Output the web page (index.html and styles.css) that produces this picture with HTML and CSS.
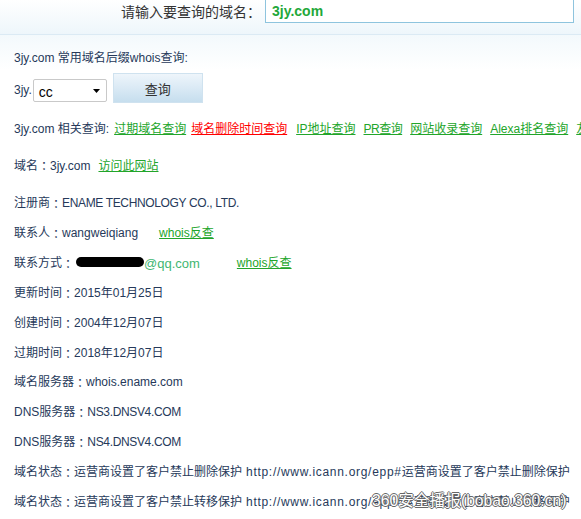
FILE: index.html
```html
<!DOCTYPE html>
<html lang="zh-CN">
<head>
<meta charset="utf-8">
<title>3jy.com whois查询</title>
<link rel="stylesheet" href="styles.css">
</head>
<body>
<div class="page">
  <header class="search-bar">
    <label class="search-label" for="domain">请输入要查询的域名<span class="colon">：</span></label>
    <input id="domain" class="search-input" type="text" value="3jy.com">
  </header>
  <main class="content">
    <p class="suffix-title">3jy.com 常用域名后缀whois查询:</p>
    <div class="suffix-form">
      <span class="suffix-prefix">3jy.</span>
      <div class="select">
        <span class="select-value">cc</span>
        <svg class="select-arrow" width="7" height="4" viewBox="0 0 7 4"><path d="M0 0H7L3.5 4Z" fill="#000"/></svg>
      </div>
      <button class="query-btn" type="button">查询</button>
    </div>
    <div class="row related">
      <span class="related-label">3jy.com 相关查询:</span>
      <a class="link first" href="#">过期域名查询</a>
      <a class="link red first" href="#">域名删除时间查询</a>
      <a class="link" href="#">IP地址查询</a>
      <a class="link narrow" href="#">PR查询</a>
      <a class="link" href="#">网站收录查询</a>
      <a class="link" href="#">Alexa排名查询</a>
      <a class="link" href="#">友情链接查询</a>
    </div>
    <div class="row domain-row">域名<span class="colon">：</span>3jy.com<a class="link visit" href="#">访问此网站</a></div>
    <div class="row registrar-row">注册商<span class="colon">：</span><span class="caps">ENAME TECHNOLOGY CO., LTD.</span></div>
    <div class="row info">联系人<span class="colon">：</span>wangweiqiang<a class="link reverse-1" href="#">whois反查</a></div>
    <div class="row info">联系方式<span class="colon">：</span><span class="redact"></span><span class="email">@qq.com</span><a class="link reverse-2" href="#">whois反查</a></div>
    <div class="row info">更新时间<span class="colon">：</span>2015年01月25日</div>
    <div class="row info">创建时间<span class="colon">：</span>2004年12月07日</div>
    <div class="row info">过期时间<span class="colon">：</span>2018年12月07日</div>
    <div class="row info">域名服务器<span class="colon">：</span>whois.ename.com</div>
    <div class="row info">DNS服务器<span class="colon">：</span><span class="caps">NS3.DNSV4.COM</span></div>
    <div class="row info">DNS服务器<span class="colon">：</span><span class="caps">NS4.DNSV4.COM</span></div>
    <div class="row info">域名状态<span class="colon">：</span>运营商设置了客户禁止删除保护<span class="url">http://www.icann.org/epp#</span>运营商设置了客户禁止删除保护</div>
    <div class="row info">域名状态<span class="colon">：</span>运营商设置了客户禁止转移保护<span class="url">http://www.icann.org/epp#</span>运营商设置了客户禁止转移保护</div>
  </main>
  <div class="watermark">360安全播报(bobao.360.cn)</div>
</div>
</body>
</html>
```
FILE: styles.css
```css
html, body {
  margin: 0;
  padding: 0;
  width: 581px;
  height: 519px;
  overflow: hidden;
  background: #fff;
}

.page {
  position: relative;
  width: 581px;
  height: 519px;
  overflow: hidden;
  font-family: "Liberation Sans", "Noto Sans CJK SC", sans-serif;
  font-size: 12px;
  color: #26395a;
  background: linear-gradient(to bottom, #f3f9fc 35px, #fff 70px);
}

.colon {
  font-family: "Noto Sans CJK TC", "Noto Sans CJK SC", sans-serif;
}

.caps {
  letter-spacing: -0.35px;
}

.url {
  margin-left: 4px;
  letter-spacing: 0.7px;
}

.search-bar {
  display: flex;
  align-items: flex-start;
  height: 34px;
  padding-left: 121px;
  border-bottom: 1px solid #dbeaf4;
  background: linear-gradient(to bottom, #fff 0, #eef6fb 34px);
  box-sizing: content-box;
}

.search-label {
  font-size: 14px;
  line-height: 22px;
  color: #333;
  width: 140px;
  white-space: nowrap;
}

.search-input {
  box-sizing: border-box;
  margin: -8px 0 0 4px;
  width: 309px;
  height: 31px;
  padding: 6px 6px 0;
  border: 1px solid #8ec4de;
  background: #fff;
  font-family: "Liberation Sans", sans-serif;
  font-size: 14px;
  font-weight: bold;
  color: #1fa83a;
  outline: none;
}

.content {
  display: block;
  padding-left: 14px;
}

.suffix-title {
  margin: 13px 0 0;
  line-height: 20px;
  white-space: nowrap;
}

.suffix-form {
  display: flex;
  align-items: flex-start;
  margin-top: 5px;
  height: 30px;
}

.suffix-prefix {
  margin-top: 6px;
  line-height: 23px;
}

.select {
  box-sizing: border-box;
  display: flex;
  align-items: center;
  justify-content: space-between;
  margin: 6px 0 0 1px;
  width: 74px;
  height: 23px;
  padding: 2px 6px 0 5px;
  border: 1px solid #c9c9c9;
  border-radius: 2px;
  background: #fff;
}

.select-value {
  font-size: 14px;
  color: #000;
}

.select-arrow {
  display: block;
  margin-top: -1px;
}

.query-btn {
  box-sizing: border-box;
  margin-left: 6px;
  width: 90px;
  height: 30px;
  padding: 0;
  border: 1px solid #cfe2ef;
  background: linear-gradient(to bottom, #eef5fb 0, #c6deee 100%);
  font-family: "Liberation Sans", "Noto Sans CJK SC", sans-serif;
  font-size: 13px;
  color: #333;
}

.row {
  display: flex;
  white-space: nowrap;
  line-height: 29.9px;
}

.related {
  margin-top: 11px;
  line-height: 30px;
}

.related > * {
  flex-shrink: 0;
}

.link {
  color: #22a52a;
  text-decoration: underline;
  margin-left: 8px;
}

.link.first {
  margin-left: 5px;
}

.link.red {
  color: #ff0000;
  margin-right: 1px;
}

.link.narrow {
  letter-spacing: -0.5px;
}

.domain-row {
  margin-top: 6.5px;
  line-height: 30px;
}

.link.visit {
  margin-left: 8px;
}

.registrar-row {
  margin-top: 8.5px;
}

.link.reverse-1 {
  margin-left: 21px;
}

.redact {
  align-self: center;
  display: block;
  margin: -3px 0 0 2px;
  width: 68px;
  height: 10px;
  border-radius: 5px;
  background: #000;
}

.email {
  font-size: 13px;
  color: #3fb672;
}

.link.reverse-2 {
  margin-left: 37px;
}

.watermark {
  position: absolute;
  left: 372px;
  top: 491px;
  font-size: 15.7px;
  line-height: 20px;
  white-space: nowrap;
  color: #fff;
  text-shadow: 1px 0 0 #666, -1px 0 0 #666, 0 1px 0 #666, 0 -1px 0 #666;
}
```
